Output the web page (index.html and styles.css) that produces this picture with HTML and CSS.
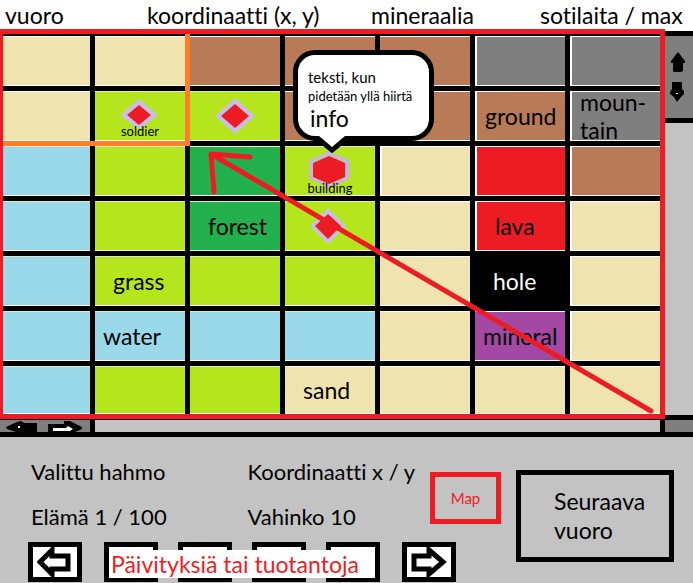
FILE: index.html
```html
<!DOCTYPE html>
<html lang="fi">
<head>
<meta charset="utf-8">
<meta name="viewport" content="width=device-width, initial-scale=1">
<title>Vuoropeli</title>
<link rel="stylesheet" href="styles.css">
</head>
<body>
<header class="status">
  <span>vuoro</span>
  <span>koordinaatti (x, y)</span>
  <span>mineraalia</span>
  <span>sotilaita / max</span>
</header>

<main class="board">
  <section class="map">
    <div class="tiles">
      <div class="tile sand"></div>
      <div class="tile sand"></div>
      <div class="tile ground"></div>
      <div class="tile ground"></div>
      <div class="tile ground"></div>
      <div class="tile mountain edged"></div>
      <div class="tile mountain edged"></div>

      <div class="tile sand"></div>
      <div class="tile grass unit captioned">
        <svg class="token" width="40" height="34" viewBox="0 0 40 34"><path fill="#c8bfe7" d="M19 1 38 17 19 32 0 17z"/><path fill="#ed1c24" d="M19 7 31 17 19 27 7 17z"/></svg>
        <span class="caption">soldier</span>
      </div>
      <div class="tile grass unit">
        <svg class="token" width="40" height="36" viewBox="0 0 40 36"><path fill="#c8bfe7" d="M20 0 40 18 20 36 0 18z"/><path fill="#ed1c24" d="M20 6 34 18 20 30 6 18z"/></svg>
      </div>
      <div class="tile ground"></div>
      <div class="tile ground"></div>
      <div class="tile ground edged near">ground</div>
      <div class="tile mountain edged near">moun-<br>tain</div>

      <div class="tile water"></div>
      <div class="tile grass"></div>
      <div class="tile forest"></div>
      <div class="tile grass unit captioned">
        <svg class="token" width="42" height="38" viewBox="0 0 42 38"><path fill="#c3bcc8" d="M20 0 41 9V28L20 38 0 28V9z"/><path fill="#ed1c24" d="M20 5 36 12V26L20 33 4 26V12z"/></svg>
        <span class="caption">building</span>
        <div class="bubble" role="tooltip">
          <p class="bubble-lead">teksti, kun</p>
          <p class="bubble-note">pidetään yllä hiirtä</p>
          <p class="bubble-info">info</p>
          <svg class="tail" width="40" height="18" viewBox="0 0 40 18"><path fill="none" stroke="#000" stroke-width="5" d="M4 1 20 14 36 1"/><path fill="#fff" d="M7 0H33L20 11z"/></svg>
        </div>
      </div>
      <div class="tile sand edged"></div>
      <div class="tile lava edged"></div>
      <div class="tile ground edged"></div>

      <div class="tile water"></div>
      <div class="tile grass"></div>
      <div class="tile forest inset">forest</div>
      <div class="tile grass unit">
        <svg class="token" width="38" height="36" viewBox="0 0 38 36"><path fill="#c8bfe7" d="M17 0 35 18 17 36 -1 18z"/><path fill="#ed1c24" d="M17 6 30 18 17 31 4 18z"/></svg>
      </div>
      <div class="tile sand"></div>
      <div class="tile lava edged inset">lava</div>
      <div class="tile sand edged"></div>

      <div class="tile water"></div>
      <div class="tile grass inset">grass</div>
      <div class="tile grass"></div>
      <div class="tile grass"></div>
      <div class="tile sand"></div>
      <div class="tile hole inset">hole</div>
      <div class="tile sand edged"></div>

      <div class="tile water"></div>
      <div class="tile water near">water</div>
      <div class="tile water"></div>
      <div class="tile water"></div>
      <div class="tile sand"></div>
      <div class="tile mineral near">mineral</div>
      <div class="tile sand edged"></div>

      <div class="tile water"></div>
      <div class="tile grass"></div>
      <div class="tile grass"></div>
      <div class="tile sand inset">sand</div>
      <div class="tile sand"></div>
      <div class="tile sand"></div>
      <div class="tile sand"></div>

      <div class="selection"></div>
    </div>
    <svg class="route" viewBox="0 0 665 390" preserveAspectRatio="none"><path fill="none" stroke="#ed1c24" stroke-width="5" stroke-linecap="round" stroke-linejoin="round" d="M651 382 211 125M250 128 211 125 214 163"/></svg>
  </section>

  <div class="scroll-y">
    <div class="scroll-y-buttons">
      <button type="button" aria-label="Ylös"><svg width="16" height="22" viewBox="0 0 16 22"><path d="M8 1 15 10V12H13V20L11 21H4L3 20V12H1V10z"/></svg></button>
      <button type="button" aria-label="Alas"><svg width="16" height="22" viewBox="0 0 16 22"><path d="M2 1H12V8L14 10V13L11 16 7 21 4 16 0 13V11L2 8z"/><path fill="#fff" d="M6 12H8V13H6z"/></svg></button>
    </div>
  </div>

  <div class="scroll-x">
    <div class="scroll-x-buttons">
      <button type="button" aria-label="Vasemmalle"><svg width="32" height="12" viewBox="0 0 32 12"><path d="M0 7 11 2 15 1 18 3H31V12H10L1 9z"/><path fill="#fff" d="M12 6h2v2h-2z"/></svg></button>
      <button type="button" aria-label="Oikealle"><svg width="36" height="12" viewBox="0 0 36 12"><path d="M0 4H16V1H22L34 7V9L27 12H0z"/><path fill="#fff" d="M5 8H18L20 6 25 9 22 11H5z"/></svg></button>
    </div>
  </div>
  <div class="corner"></div>
</main>

<footer class="panel">
  <div class="stats">
    <p>Valittu hahmo</p>
    <p>Koordinaatti x / y</p>
    <p>Elämä 1 / 100</p>
    <p>Vahinko 10</p>
  </div>
  <button type="button" class="map-button">Map</button>
  <button type="button" class="next-turn">Seuraava<br>vuoro</button>
  <div class="queue">
    <button type="button" class="slot" aria-label="Edellinen"><svg width="36" height="30" viewBox="0 0 36 30"><path fill="#fff" stroke="#000" stroke-width="5" d="M15 3 3 15 15 27V22H31V9H15z"/></svg></button>
    <div class="slots">
      <span class="slot"></span>
      <span class="slot"></span>
      <span class="slot"></span>
      <span class="slot"></span>
      <span class="queue-label">Päivityksiä tai tuotantoja</span>
    </div>
    <button type="button" class="slot" aria-label="Seuraava"><svg width="36" height="30" viewBox="0 0 36 30"><path fill="#fff" stroke="#000" stroke-width="5" d="M18 3 32 15 18 27V22H3V9H18z"/></svg></button>
  </div>
</footer>
</body>
</html>
```
FILE: styles.css
```css
* {
  box-sizing: border-box;
}

body {
  margin: 0;
  min-height: 100vh;
  background: #c3c3c3;
  color: #000;
  font: 23px/28px Lato, "Open Sans", sans-serif;
  font-variant-ligatures: none;
}

p {
  margin: 0;
}

button {
  margin: 0;
  padding: 0;
  border: 0;
  background: none;
  color: inherit;
  font: inherit;
}

svg {
  display: block;
}

/* Status line */
.status {
  display: grid;
  grid-template-columns: 142fr 224fr 169fr 153fr;
  height: 29px;
  padding: 1px 0 0 5px;
  background: #fff;
  white-space: nowrap;
}

.status span {
  min-width: 0;
}

/* Board with its scroll bars */
.board {
  display: grid;
  grid-template-columns: 1fr 28px;
  background: linear-gradient(#fff 2px, #c3c3c3 2px);
}

.map {
  position: relative;
  border: 5px solid #ed1c24;
  border-left-width: 3px;
  background: #000;
}

.tiles {
  position: relative;
  display: grid;
  grid-template-columns: 87fr repeat(6, 90fr);
  grid-template-rows: repeat(6, 50px) 48px;
  gap: 5px;
  padding-top: 2px;
}

.tile {
  position: relative;
  display: flex;
  align-items: center;
  min-width: 0;
  border: solid #fff;
  border-width: 1px 0;
}

.edged {
  border-left-width: 2px;
}

.near {
  padding-left: 8px;
}

.inset {
  padding-left: 18px;
}

.sand { background: #efe4b0; }
.ground { background: #b97a57; }
.mountain { background: #7f7f7f; }
.grass { background: #b5e61d; }
.forest { background: #22b14c; }
.water { background: #99d9ea; }
.lava { background: #ed1c24; }
.hole { background: #000; color: #fff; border-color: #000; }
.mineral { background: #a349a4; }

.grass,
.forest,
.water {
  border-top-color: #dcebc8;
}

.unit {
  flex-direction: column;
  justify-content: center;
}

.captioned {
  padding-top: 4px;
}

.token {
  flex: none;
}

.caption {
  margin-top: -8px;
  font-size: 13px;
  line-height: 14px;
}

.selection {
  position: absolute;
  z-index: 1;
  grid-area: 1 / 1 / 3 / 3;
  inset: -2px -5px -5px 0;
  border: solid #ff7f27;
  border-width: 0 5px 5px 0;
}

.route {
  position: absolute;
  top: -5px;
  left: -3px;
  width: calc(100% + 8px);
  height: calc(100% + 10px);
  pointer-events: none;
}

.bubble {
  position: absolute;
  z-index: 2;
  left: 8px;
  bottom: 54px;
  width: 141px;
  padding: 12px 0 5px 10px;
  border: 5px solid #000;
  border-radius: 22px;
  background: #fff;
  white-space: nowrap;
}

.bubble-lead {
  font-size: 15px;
  line-height: 20px;
}

.bubble-note {
  font-size: 13px;
  line-height: 18px;
}

.bubble-info {
  padding-left: 2px;
  line-height: 26px;
}

.tail {
  position: absolute;
  top: 100%;
  left: 14px;
}

.scroll-y {
  margin-top: 2px;
  border-top: 5px solid #000;
}

.scroll-y-buttons {
  display: flex;
  flex-direction: column;
  gap: 8px;
  padding: 15px 0 15px 5px;
  border-bottom: 5px solid #000;
  background: #7f7f7f;
}

.scroll-x {
  display: flex;
  border: solid #000;
  border-width: 1px 5px 5px 0;
}

.scroll-x-buttons {
  display: flex;
  flex: none;
  gap: 10px;
  width: 95px;
  height: 12px;
  padding-left: 6px;
  border-right: 5px solid #000;
  background: #7f7f7f;
}

.corner {
  margin-top: -4px;
  border: solid #000;
  border-width: 5px 0;
  background: #7f7f7f;
}

/* Selected unit and actions */
.panel {
  display: grid;
  grid-template-columns: 402fr 71fr 15fr 158fr;
  grid-template-rows: 72px 40px;
  padding: 33px 19px 0 28px;
}

.stats {
  display: grid;
  grid-template-columns: 216fr 182fr;
  grid-auto-rows: 28px;
  row-gap: 17px;
  margin-top: -12px;
  padding-left: 3px;
  font-size: 22px;
  white-space: nowrap;
}

.map-button {
  height: 52px;
  margin-top: 2px;
  border: 5px solid #ed1c24;
  color: #ed1c24;
  font-size: 15px;
  line-height: 20px;
}

.next-turn {
  grid-area: 1 / 4 / 3 / 5;
  align-self: start;
  height: 92px;
  padding: 0 0 0 33px;
  border: 5px solid #000;
  line-height: 29px;
  text-align: left;
}

.queue {
  grid-area: 2 / 1 / 3 / 4;
  display: flex;
  gap: 22px;
}

.slot {
  display: grid;
  place-items: center;
  flex: none;
  width: 54px;
  height: 40px;
  border: 5px solid #000;
  background: #fff;
}

.slots {
  position: relative;
  display: flex;
  gap: 20px;
}

.queue-label {
  position: absolute;
  inset: 8px 5px auto;
  padding-left: 2px;
  background: #fff;
  color: #ed1c24;
  white-space: nowrap;
}
```
